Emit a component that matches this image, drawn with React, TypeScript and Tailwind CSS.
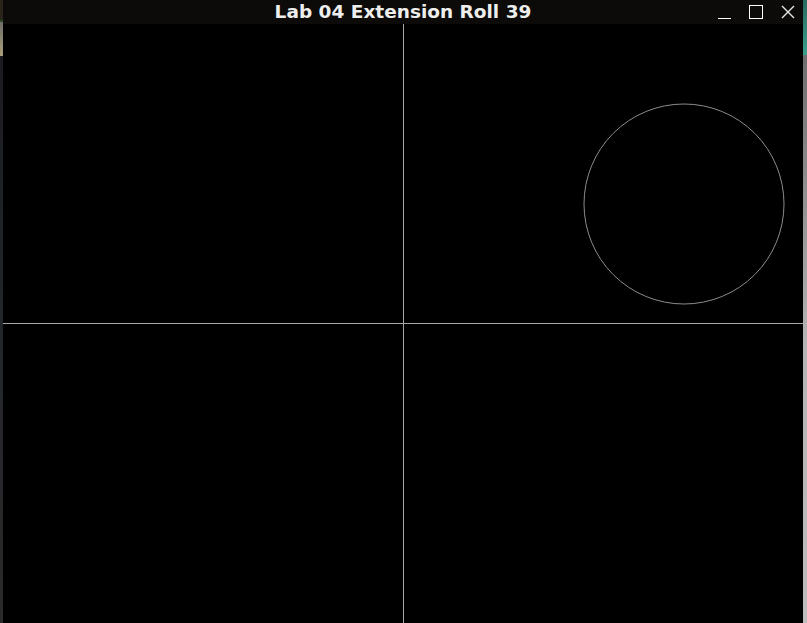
export default function App() {
  return (
    <div className="flex h-[623px] w-[807px] overflow-hidden bg-black">
      {/* desktop peeking out on the left */}
      <div className="flex w-[3px] flex-col">
        <div className="h-[20px] bg-[#2a2418]" />
        <div className="h-[2px] bg-[#2f4a26]" />
        <div className="h-[34px] bg-gradient-to-b from-[#6e6e6a] to-[#a89f78]" />
        <div className="flex-1 bg-gradient-to-b from-[#1a1c20] via-[#23262b] to-[#2a2a2a]" />
      </div>

      <div className="flex flex-1 flex-col">
        {/* title bar */}
        <div className="relative flex h-[24px] items-center justify-center bg-[#0c0b09]">
          <span className="font-['DejaVu_Sans',sans-serif] text-[18.5px] font-bold leading-none text-[#eeeeec]">
            Lab 04 Extension Roll 39
          </span>
          <div className="absolute right-[8px] top-0 flex h-[24px] items-center gap-[18px]">
            <div className="mt-[13px] h-[1.5px] w-[13px] bg-white" />
            <div className="h-[14px] w-[14px] border-[1.5px] border-white" />
            <svg width="14" height="14" viewBox="0 0 14 14">
              <path d="M1 1 L13 13 M13 1 L1 13" stroke="#e8e8e8" strokeWidth="1.4" />
            </svg>
          </div>
        </div>

        {/* drawing canvas */}
        <div className="flex-1 bg-black">
          <svg width="800" height="599" viewBox="0 0 800 599" shapeRendering="crispEdges">
            <line x1="400.5" y1="0" x2="400.5" y2="599" stroke="#a8a8a8" strokeWidth="1" />
            <line x1="0" y1="299.5" x2="800" y2="299.5" stroke="#a8a8a8" strokeWidth="1" />
            <circle cx="681" cy="180" r="100" fill="none" stroke="#8c8c8c" strokeWidth="1" shapeRendering="auto" />
          </svg>
        </div>
      </div>

      {/* desktop peeking out on the right */}
      <div className="flex w-[4px] flex-col">
        <div className="h-[55px] bg-gradient-to-b from-[#2a6a5e] to-[#3aa08c]" />
        <div className="flex-1 bg-gradient-to-b from-[#6e6e6e] via-[#b4b4b4] to-[#bdbdbd]" />
      </div>
    </div>
  );
}
